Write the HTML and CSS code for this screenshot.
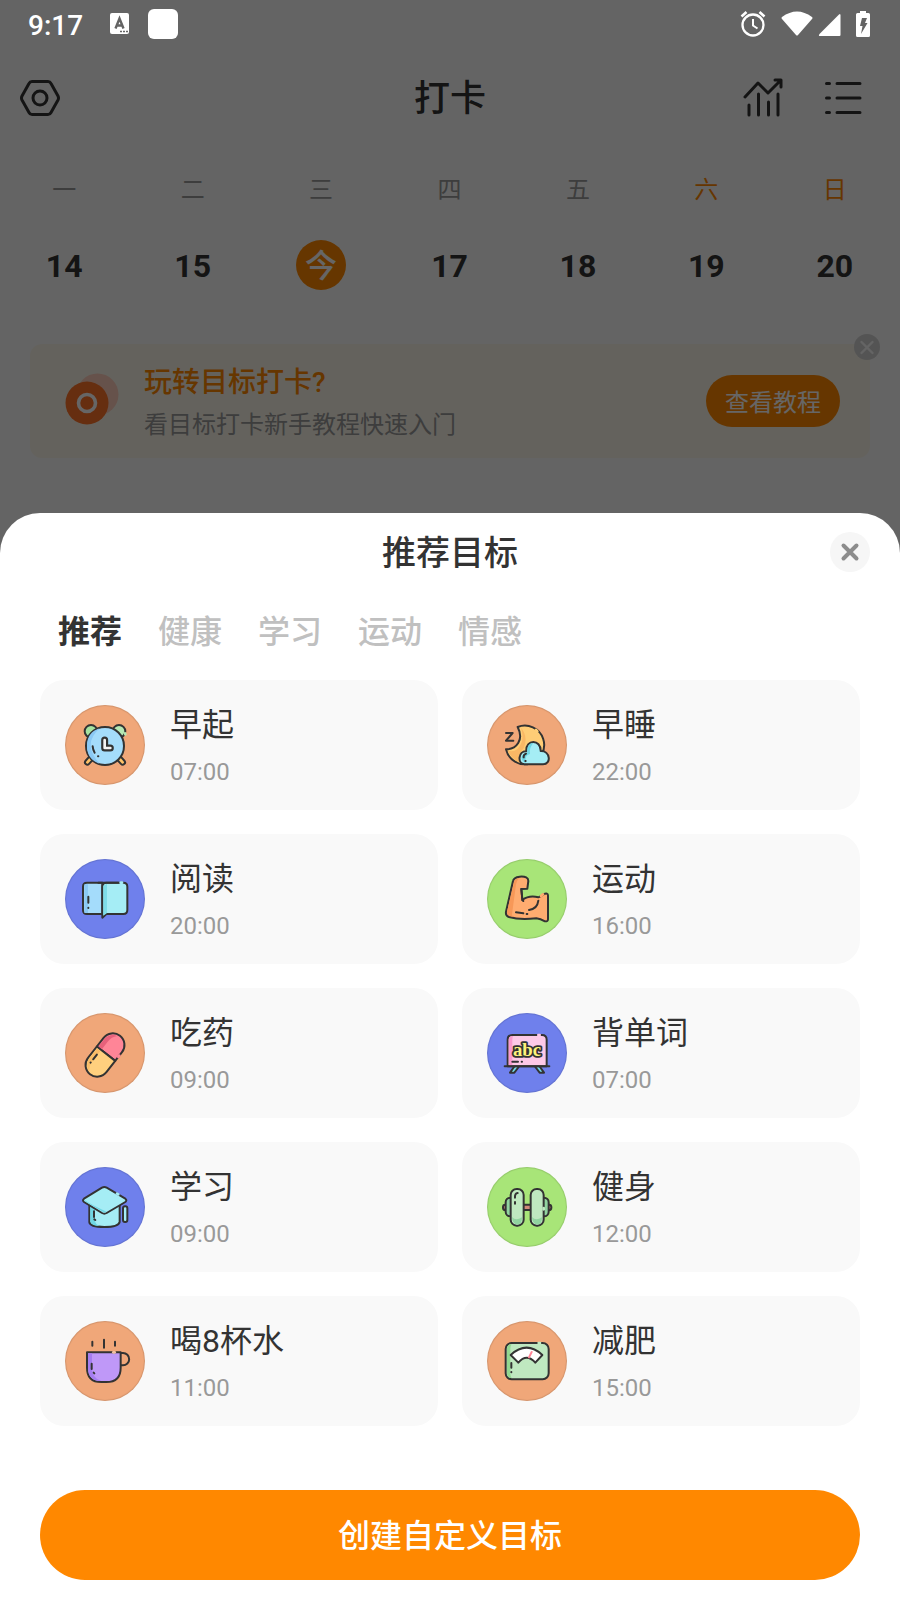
FILE: index.html
```
<!DOCTYPE html>
<html lang="zh-CN">
  <head>
    <meta charset="utf-8">
    <meta name="viewport" content="width=device-width, initial-scale=1">
    <title>打卡</title>
    <link rel="stylesheet" href="styles.css">
  </head>
  <body>
    <div class="status">
      <span class="status-time">9:17</span>
      <svg class="status-input" width="20" height="22" viewBox="0 0 20 22">
        <rect x="0" y="0" width="19" height="21" rx="2" fill="#fff"/>
        <path d="M5.500 15.500L9.500 5.500l4 10M7 12.500h5" fill="none" stroke="#646464" stroke-width="2.400"/>
        <path d="M10 18.500h2M13 18.500h2M16 18.500h2" stroke="#646464" stroke-width="1.500"/>
      </svg>
      <span class="status-app"></span>
      <div class="status-right">
        <svg width="26" height="28" viewBox="0 0 26 28" fill="none" stroke="#fff">
          <circle cx="13" cy="15" r="10.500" stroke-width="2.300"/>
          <path d="M13 9v6.500l4.500 3" stroke-width="2"/>
          <path d="M1.500 6.500l5-4.500M24.500 6.500l-5-4.500" stroke-width="2.600"/>
        </svg>
        <svg class="wifi" width="32" height="26" viewBox="0 0 32 26">
          <path d="M1 6Q16-5 31 6Q32 7 31 8L17 24Q16 25 15 24L1 8Q0 7 1 6z" fill="#fff"/>
        </svg>
        <svg class="signal" width="23" height="26" viewBox="0 0 23 26">
          <path d="M21 3.500Q22.500 2 22.500 4.500V24q0 1-1 1H2Q0 25 1.500 23z" fill="#fff"/>
        </svg>
        <svg width="14" height="28" viewBox="0 0 14 28">
          <path d="M4 1h6v2h2.500q1.500 0 1.500 1.500v21q0 1.500-1.500 1.500h-11Q0 27 0 25.500v-21Q0 3 1.500 3H4z" fill="#fff"/>
          <path d="M6 8h5l-2 5h2.500L5 24l1.500-8H4z" fill="#646464"/>
        </svg>
      </div>
    </div>

    <header class="nav">
      <button class="nav-btn" aria-label="设置">
        <svg width="40" height="38" viewBox="0 0 40 38" fill="none" stroke="#333" stroke-width="3" stroke-linejoin="round">
          <path d="M12 2.500h16q2 0 3 2l7 12.500q1 2 0 4l-7 12.500q-1 2-3 2H12q-2 0-3-2L2 21q-1-2 0-4L9 4.500q1-2 3-2z"/>
          <circle cx="20" cy="19" r="7"/>
        </svg>
      </button>
      <h1>打卡</h1>
      <div class="nav-right">
        <button aria-label="统计">
          <svg width="40" height="40" viewBox="0 0 40 40" fill="none" stroke="#333" stroke-width="3" stroke-linecap="round" stroke-linejoin="round">
            <path d="M2 19L15 5l10 10L37 3M32 2h6v7"/>
            <path d="M6 27v10M15.500 16v21M25.500 24v13M35 16v21"/>
          </svg>
        </button>
        <button aria-label="列表">
          <svg width="38" height="38" viewBox="0 0 38 38" fill="none" stroke="#333" stroke-width="3" stroke-linecap="round">
            <path d="M2.500 4.500h3M13 4.500h23M2.500 19h3M13 19h23M2.500 33.500h3M13 33.500h23"/>
          </svg>
        </button>
      </div>
    </header>

    <div class="week">
      <div class="day"><span>一</span><button>14</button></div>
      <div class="day"><span>二</span><button>15</button></div>
      <div class="day is-today"><span>三</span><button>今</button></div>
      <div class="day"><span>四</span><button>17</button></div>
      <div class="day"><span>五</span><button>18</button></div>
      <div class="day is-weekend"><span>六</span><button>19</button></div>
      <div class="day is-weekend"><span>日</span><button>20</button></div>
    </div>

    <section class="guide">
      <svg class="guide-icon" width="54" height="56" viewBox="0 0 54 56">
        <circle cx="32.500" cy="21.500" r="21" fill="#ffcdbb"/>
        <circle cx="22" cy="30" r="21.500" fill="#ff7328"/>
        <circle cx="22" cy="30" r="8.500" fill="none" stroke="#fff" stroke-width="3.600"/>
      </svg>
      <div class="guide-text">
        <h2>玩转目标打卡?</h2>
        <p>看目标打卡新手教程快速入门</p>
      </div>
      <button class="guide-more">查看教程</button>
      <button class="guide-close" aria-label="关闭提示">
        <svg width="26" height="26" viewBox="0 0 26 26" stroke="#fafafa" stroke-width="2.400" stroke-linecap="round">
          <path d="M7.500 8l11 11M18.500 8l-11 11"/>
        </svg>
      </button>
    </section>

    <div class="mask"></div>

    <main class="sheet">
      <div class="sheet-head">
        <h2>推荐目标</h2>
        <button class="sheet-close" aria-label="关闭">
          <svg width="40" height="40" viewBox="0 0 40 40" stroke="#8c8c8c" stroke-width="4" stroke-linecap="round">
            <path d="M13.500 13.500l13 13M26.500 13.500l-13 13"/>
          </svg>
        </button>
      </div>

      <nav class="tabs">
        <button class="is-active">推荐</button>
        <button>健康</button>
        <button>学习</button>
        <button>运动</button>
        <button>情感</button>
      </nav>

      <div class="goals">
        <button class="goal">
          <svg class="icon orange" viewBox="0 0 240 240">
            <path d="M76 162l-9 10M164 162l9 10" stroke-width="20"/>
            <path d="M76 162l-9 10M164 162l9 10" stroke="#ffc368" stroke-width="8"/>
            <circle cx="78" cy="79" r="19" fill="#a5e2a0"/>
            <circle cx="162" cy="79" r="19" fill="#b5e8b3"/>
            <circle cx="120" cy="123" r="57" fill="#a4dcfb"/>
            <path d="M104 70Q50 118 104 176Q66 164 66 123T104 70z" fill="#8bc9f4" stroke="none"/>
            <path d="M119 105v24h17" stroke-width="21"/>
            <path d="M119 105v24h17" stroke="#f4f4f4" stroke-width="8"/>
            <path d="M83 124q1 11 6 19M99 154h1"/>
            <path d="M180 85l1 3" stroke="#b5e8b3" stroke-width="8"/>
          </svg>
          <span class="goal-text"><span class="goal-name">早起</span><time>07:00</time></span>
        </button>
        <button class="goal">
          <svg class="icon orange" viewBox="0 0 240 240">
            <path d="M92 66A58 58 0 1 1 57 133C88 133 112 105 92 66z" fill="#ffcd76"/>
            <path d="M101 67Q116 105 92 131Q80 142 62 137Q76 164 98 174Q90 150 110 130Q125 95 101 67z" fill="#f9b865" stroke="none"/>
            <path d="M147 75l4 4" stroke="#ffcd76" stroke-width="8"/>
            <path d="M112 178C90 175 94 138 118 139C115 102 162 102 161 138C190 137 194 178 168 178z" fill="#a5edf5"/>
            <path d="M116 174C97 165 101 146 121 143C119 122 128 114 139 114Q126 128 129 147Q112 150 116 174z" fill="#6fd7e4" stroke="none"/>
            <path d="M117 146q-8 3-7 11M115 168h1M57 84h20l-20 23h22"/>
          </svg>
          <span class="goal-text"><span class="goal-name">早睡</span><time>22:00</time></span>
        </button>
        <button class="goal">
          <svg class="icon blue" viewBox="0 0 240 240">
            <path d="M112 71H66q-12 0-12 12v70q0 12 12 12h46z" fill="#a4dcfb"/>
            <path d="M58 76h11v86h-11z" fill="#8bc9f4" stroke="none"/>
            <path d="M124 71h51q12 0 12 12v70q0 12-12 12h-51l-12 11V83q0-12 12-12z" fill="#a5edf5"/>
            <path d="M115 81l11-7v88l-11 8z" fill="#7edde8" stroke="none"/>
            <path d="M100 71h60"/>
            <path d="M167 71h4" stroke="#a5edf5" stroke-width="8"/>
            <path d="M70 113v18M70 146v1"/>
          </svg>
          <span class="goal-text"><span class="goal-name">阅读</span><time>20:00</time></span>
        </button>
        <button class="goal">
          <svg class="icon green" viewBox="0 0 240 240">
            <path d="M78 66Q80 55 98 53Q124 51 124 66L121 89L103 90L106 123Q126 108 154 115Q163 112 168 107Q184 98 183 112V181Q183 188 174 187Q160 179 148 178Q98 184 66 174Q55 170 57 158z" fill="#ffac70"/>
            <path d="M82 66Q86 58 97 57Q88 64 86 84L75 166Q74 171 82 174Q59 172 60 158z" fill="#f79858" stroke="none"/>
            <path d="M103 90l3 31M106 123l3 3M154 125q-3 25-28 28M87 160l22 3M119 165h2"/>
            <path d="M162 111l6-5" stroke="#ffac70" stroke-width="8"/>
          </svg>
          <span class="goal-text"><span class="goal-name">运动</span><time>16:00</time></span>
        </button>
        <button class="goal">
          <svg class="icon orange" viewBox="0 0 240 240">
            <g transform="translate(120 126) rotate(38)">
              <path d="M-35-5V-38a35 35 0 0 1 70 0V-5z" fill="#ff8597"/>
              <path d="M-35-5V38a35 35 0 0 0 70 0V-5z" fill="#ffd07e"/>
              <path d="M-31-8V-38Q-28-62-6-68Q-19-54-18-38V-8z" fill="#e7617b" stroke="none"/>
              <path d="M-31-1V38Q-28 62-6 68Q-19 54-18 38V-1z" fill="#f9bd68" stroke="none"/>
              <path d="M-20 14v18M-20 44v1"/>
              <path d="M35-25v5" stroke="#ff8597" stroke-width="8"/>
            </g>
          </svg>
          <span class="goal-text"><span class="goal-name">吃药</span><time>09:00</time></span>
        </button>
        <button class="goal">
          <svg class="icon blue" viewBox="0 0 240 240">
            <path d="M81 162l-12 17h13l13-17M159 162l12 17h-13l-13-17" fill="#75dce9"/>
            <path d="M62 160V80q0-14 14-14h89q14 0 14 14v80z" fill="#fdc9e7"/>
            <path d="M65 157V80q0-11 14-11-3 2-3 11v77z" fill="#f99bcf" stroke="none"/>
            <path d="M53 160h134M76 146h17M104 146h1"/>
            <path d="M154 66h4" stroke="#fdc9e7" stroke-width="8"/>
            <text class="icon-abc" x="120" y="129">abc</text>
          </svg>
          <span class="goal-text"><span class="goal-name">背单词</span><time>07:00</time></span>
        </button>
        <button class="goal">
          <svg class="icon blue" viewBox="0 0 240 240">
            <path d="M73 113v52Q75 180 118 180T164 165V113z" fill="#a5edf5"/>
            <path d="M76 117v47q2 12 28 13-14-5-14-17v-37z" fill="#6fd7e4" stroke="none"/>
            <path d="M57 95L111 62q7-4 14 0l56 33q6 5 0 10l-56 33q-7 4-14 0L57 105q-6-5 0-10z" fill="#a5edf5"/>
            <path d="M59 99q18 14 66 35-5 4-12 0L60 103z" fill="#6fd7e4" stroke="none"/>
            <path d="M156 80l4 2" stroke="#a5edf5" stroke-width="8"/>
            <rect x="174" y="118" width="13" height="47" rx="6" fill="#a5edf5"/>
            <path d="M87 133v17M88 157l3 2"/>
          </svg>
          <span class="goal-text"><span class="goal-name">学习</span><time>09:00</time></span>
        </button>
        <button class="goal">
          <svg class="icon green" viewBox="0 0 240 240">
            <rect x="48" y="113" width="145" height="16" rx="7" fill="#d18979"/>
            <rect x="56" y="92" width="40" height="56" rx="14" fill="#91d4a0"/>
            <rect x="145" y="92" width="40" height="56" rx="14" fill="#91d4a0"/>
            <rect x="71" y="66" width="39" height="110" rx="18" fill="#bfe8c0"/>
            <rect x="131" y="66" width="39" height="110" rx="18" fill="#bfe8c0"/>
            <path d="M75 150Q86 163 105 151Q106 173 90 173Q76 170 75 150zM135 150Q146 163 165 151Q166 173 150 173Q136 170 135 150z" fill="#91d4a0" stroke="none"/>
            <path d="M84 92q-1-13 8-14M84 105v5"/>
            <path d="M170 123v4" stroke="#bfe8c0" stroke-width="8"/>
          </svg>
          <span class="goal-text"><span class="goal-name">健身</span><time>12:00</time></span>
        </button>
        <button class="goal">
          <svg class="icon orange" viewBox="0 0 240 240">
            <path d="M168 96h6a17 17 0 0 1 0 37h-6" fill="none"/>
            <path d="M66 94h101v46q0 43-43 43h-15q-43 0-43-43z" fill="#bf98f8"/>
            <path d="M69 97h12v43q0 32 28 40-40 0-40-40z" fill="#a57df0" stroke="none"/>
            <path d="M145 94h4" stroke="#f0c0a0" stroke-width="8"/>
            <path d="M82 62v12M117 56v24M150 62v12M80 128v16M86 155l2 2"/>
          </svg>
          <span class="goal-text"><span class="goal-name">喝8杯水</span><time>11:00</time></span>
        </button>
        <button class="goal">
          <svg class="icon orange" viewBox="0 0 240 240">
            <rect x="56" y="66" width="129" height="109" rx="18" fill="#bfe8c0"/>
            <path d="M74 70Q60 70 60 84v73q0 14 14 14-4-4-4-14V84q0-11 4-14z" fill="#91d890" stroke="none"/>
            <path d="M71 102Q119 58 166 102L145 125Q119 96 94 125z" fill="#fff"/>
            <path d="M134 93l-8 16" stroke="#ff8597"/>
            <path d="M73 126v14M73 153v1"/>
            <path d="M155 66h4" stroke="#bfe8c0" stroke-width="8"/>
          </svg>
          <span class="goal-text"><span class="goal-name">减肥</span><time>15:00</time></span>
        </button>
      </div>

      <button class="create">创建自定义目标</button>
    </main>
  </body>
</html>
```

FILE: styles.css
```
* {
  box-sizing: border-box;
}
body {
  position: relative;
  display: flex;
  flex-direction: column;
  min-height: 100vh;
  margin: 0;
  background-color: #fafafa;
  color: #333;
  font-family: Roboto, "Noto Sans CJK SC", sans-serif;
}
h1,
h2,
p {
  margin: 0;
}
button {
  padding: 0;
  border: 0;
  background: none;
  color: inherit;
  font: inherit;
  cursor: pointer;
}
svg {
  display: block;
}

/* 状态栏 */
.status {
  position: relative;
  z-index: 2;
  display: flex;
  align-items: center;
  height: 48px;
  padding: 0 30px 0 28px;
  color: #fff;
}
.status-time {
  padding-top: 2px;
  font-size: 28px;
  font-weight: 500;
}
.status-input {
  margin-left: 27px;
}
.status-app {
  width: 30px;
  height: 30px;
  margin-left: 18px;
  border-radius: 6px;
  background-color: #fff;
}
.status-right {
  display: flex;
  align-items: center;
  margin-left: auto;
}
.wifi {
  margin-left: 15px;
}
.signal {
  margin: 0 15px 0 5px;
}

/* 顶部导航 */
.nav {
  display: grid;
  grid-template-columns: 1fr auto 1fr;
  align-items: center;
  height: 100px;
  padding: 0 20px;
}
.nav h1 {
  padding-top: 2px;
  font-size: 36px;
  font-weight: 500;
  line-height: 48px;
}
.nav-btn {
  justify-self: start;
}
.nav-right {
  display: flex;
  align-items: center;
  justify-content: flex-end;
  gap: 41px;
  padding-right: 18px;
}

/* 星期 */
.week {
  display: grid;
  grid-template-columns: repeat(7, 1fr);
  margin-top: 24px;
  padding-right: 1px;
}
.day {
  display: flex;
  flex-direction: column;
  align-items: center;
  gap: 32px;
  color: #999;
  font-size: 24px;
  line-height: 36px;
}
.day button {
  width: 50px;
  height: 50px;
  padding-top: 2px;
  border-radius: 50%;
  color: #333;
  font-size: 32px;
  font-weight: 700;
}
.is-weekend {
  color: #ff8800;
}
.day.is-today button {
  background-color: #ff8800;
  color: #fff;
  font-weight: 500;
}

/* 新手教程 */
.guide {
  position: relative;
  display: flex;
  align-items: center;
  height: 114px;
  margin: 54px 30px 55px;
  padding: 0 30px 0 35px;
  border-radius: 12px;
  background-color: #faf5e9;
}
.guide-text {
  margin: 0 auto 0 25px;
  padding-top: 5px;
}
.guide h2 {
  color: #ff8800;
  font-size: 28px;
  font-weight: 500;
  line-height: 42px;
}
.guide p {
  color: #999;
  font-size: 24px;
  line-height: 42px;
}
.guide-more {
  height: 52px;
  padding: 0 19px 2px;
  border-radius: 26px;
  background-color: #ff8800;
  color: #fff;
  font-size: 24px;
}
.guide-close {
  position: absolute;
  top: -10px;
  right: -10px;
  border-radius: 50%;
  background-color: #d2d2d2;
}

.mask {
  position: absolute;
  top: 0;
  right: 0;
  bottom: 0;
  left: 0;
  background-color: rgba(0, 0, 0, 0.6);
}

/* 弹层 */
.sheet {
  position: relative;
  flex: 1;
  padding: 19px 40px 20px;
  border-radius: 40px 40px 0 0;
  background-color: #fff;
}
.sheet-head {
  display: grid;
  grid-template-columns: 40px 1fr 40px;
  align-items: center;
  height: 40px;
  margin: 0 -10px;
}
.sheet-head h2 {
  grid-column: 2;
  padding-top: 2px;
  font-size: 34px;
  font-weight: 500;
  line-height: 38px;
  text-align: center;
}
.sheet-close {
  border-radius: 50%;
  background-color: #f6f6f6;
}
.tabs {
  display: flex;
  gap: 36px;
  margin: 36px 18px 24px;
}
.tabs button {
  color: #c0c0c0;
  font-size: 32px;
  font-weight: 500;
  line-height: 48px;
}
.tabs .is-active {
  color: #333;
  font-weight: 700;
}
.goals {
  display: grid;
  grid-template-columns: 1fr 1fr;
  gap: 24px;
}
.goal {
  display: flex;
  align-items: center;
  gap: 25px;
  height: 130px;
  padding: 0 25px;
  border-radius: 24px;
  background-color: #f9f9f9;
  text-align: left;
}
.goal-text {
  padding-top: 6px;
}
.goal-name {
  display: block;
  font-size: 32px;
  line-height: 48px;
}
.goal time {
  display: block;
  color: #999;
  font-size: 24px;
  line-height: 46px;
}
.icon {
  width: 80px;
  height: 80px;
  border-radius: 50%;
  box-shadow: inset 0 0 1px 1px rgba(0, 0, 0, 0.12);
  stroke: #333;
  stroke-width: 6px;
  stroke-linecap: round;
  stroke-linejoin: round;
  fill: none;
}
.icon.orange {
  background-color: #f0a779;
}
.icon.blue {
  background-color: #6f80ec;
}
.icon.green {
  background-color: #a8e578;
}
.icon-abc {
  fill: #fff27a;
  stroke-width: 11px;
  paint-order: stroke;
  font-family: "Liberation Serif", serif;
  font-size: 56px;
  font-weight: 700;
  text-anchor: middle;
}
.create {
  width: 100%;
  height: 90px;
  margin-top: 64px;
  padding-bottom: 4px;
  border-radius: 45px;
  background-color: #ff8800;
  color: #fff;
  font-size: 32px;
  font-weight: 500;
}
```
